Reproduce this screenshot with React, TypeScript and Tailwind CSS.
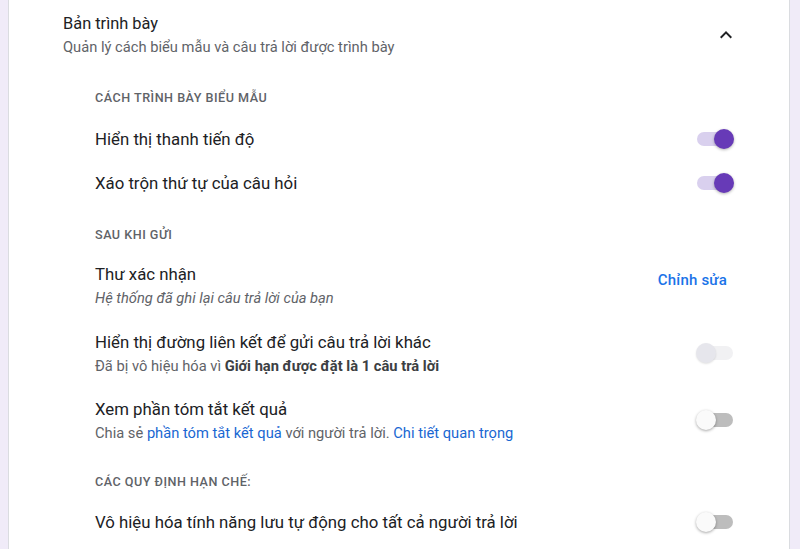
import React from "react";

type ToggleState = "on" | "off" | "disabled";

function Toggle({ state }: { state: ToggleState }) {
  const track =
    state === "on" ? "bg-[#d9d0ee]" : state === "off" ? "bg-[#bdbdbd]" : "bg-[#f1f1f3]";
  const knob =
    state === "on"
      ? "right-0 bg-[#673ab7] shadow-[0_1px_3px_rgba(0,0,0,0.3)]"
      : state === "off"
        ? "left-0 bg-[#fafafa] shadow-[0_1px_3px_rgba(0,0,0,0.35)]"
        : "left-0 bg-[#e6e6ec] shadow-[0_1px_2px_rgba(0,0,0,0.12)]";
  return (
    <div className="relative w-[38px] h-[20px] shrink-0">
      <div className={`absolute left-[1px] right-[1px] top-[3px] h-[14px] rounded-full ${track}`} />
      <div className={`absolute top-0 w-[20px] h-[20px] rounded-full ${knob}`} />
    </div>
  );
}

function SectionLabel({ children, className }: { children: React.ReactNode; className: string }) {
  return (
    <div className={`h-[20px] leading-[20px] text-[12.6px] font-medium tracking-[0.5px] text-[#5f6368] uppercase ${className}`}>
      {children}
    </div>
  );
}

function SimpleRow({ label, toggle }: { label: string; toggle: ToggleState }) {
  return (
    <div className="flex items-center justify-between h-[44px]">
      <span className="text-[16.8px] leading-[24px] text-[#202124]">{label}</span>
      <Toggle state={toggle} />
    </div>
  );
}

export default function App() {
  return (
    <div
      className="min-h-screen bg-[#f0ebf8] pl-[8px] pr-[10px]"
      style={{ fontFamily: "Roboto, 'Noto Sans', Arial, sans-serif" }}
    >
      <div className="bg-white border-x border-[#dadce0] h-[549px] overflow-hidden">
        <div className="flex items-center justify-between pt-[12px] pl-[54px] pr-[51px]">
          <div>
            <div className="text-[16.4px] leading-[24px] text-[#202124]">Bản trình bày</div>
            <div className="mt-[1px] text-[14.7px] leading-[20px] text-[#5f6368]">
              Quản lý cách biểu mẫu và câu trả lời được trình bày
            </div>
          </div>
          <svg width="24" height="24" viewBox="0 0 24 24" className="mt-[1px]" fill="#202124">
            <path d="M12 8l-6 6 1.41 1.41L12 10.83l4.59 4.58L18 14z" />
          </svg>
        </div>

        <div className="pl-[86px] pr-[55px]">
          <SectionLabel className="mt-[31px]">Cách trình bày biểu mẫu</SectionLabel>
          <div className="mt-[9px]">
            <SimpleRow label="Hiển thị thanh tiến độ" toggle="on" />
            <SimpleRow label="Xáo trộn thứ tự của câu hỏi" toggle="on" />
          </div>

          <SectionLabel className="mt-[20px]">Sau khi gửi</SectionLabel>

          <div className="mt-[17px] flex items-start justify-between">
            <div>
              <div className="text-[16.8px] leading-[24px] text-[#202124]">Thư xác nhận</div>
              <div className="mt-[2px] text-[14.7px] leading-[20px] italic text-[#5f6368]">
                Hệ thống đã ghi lại câu trả lời của bạn
              </div>
            </div>
            <button className="mt-[8px] mr-[7px] text-[15px] leading-[20px] font-medium tracking-[0.2px] text-[#1a73e8]">
              Chỉnh sửa
            </button>
          </div>

          <div className="mt-[22px] flex items-center justify-between">
            <div>
              <div className="text-[16.8px] leading-[24px] text-[#202124]">
                Hiển thị đường liên kết để gửi câu trả lời khác
              </div>
              <div className="mt-[2px] text-[14.7px] leading-[20px] text-[#5f6368]">
                Đã bị vô hiệu hóa vì{" "}
                <span className="font-bold text-[#3c4043]">Giới hạn được đặt là 1 câu trả lời</span>
              </div>
            </div>
            <Toggle state="disabled" />
          </div>

          <div className="mt-[21px] flex items-center justify-between">
            <div>
              <div className="text-[16.8px] leading-[24px] text-[#202124]">Xem phần tóm tắt kết quả</div>
              <div className="mt-[2px] text-[14.7px] leading-[20px] text-[#5f6368]">
                Chia sẻ <span className="text-[#1967d2]">phần tóm tắt kết quả</span> với người trả lời.{" "}
                <span className="text-[#1967d2]">Chi tiết quan trọng</span>
              </div>
            </div>
            <Toggle state="off" />
          </div>

          <SectionLabel className="mt-[29px]">Các quy định hạn chế:</SectionLabel>

          <div className="mt-[18px] flex items-center justify-between h-[24px]">
            <span className="text-[16.8px] leading-[24px] text-[#202124]">
              Vô hiệu hóa tính năng lưu tự động cho tất cả người trả lời
            </span>
            <Toggle state="off" />
          </div>
        </div>
      </div>
    </div>
  );
}
